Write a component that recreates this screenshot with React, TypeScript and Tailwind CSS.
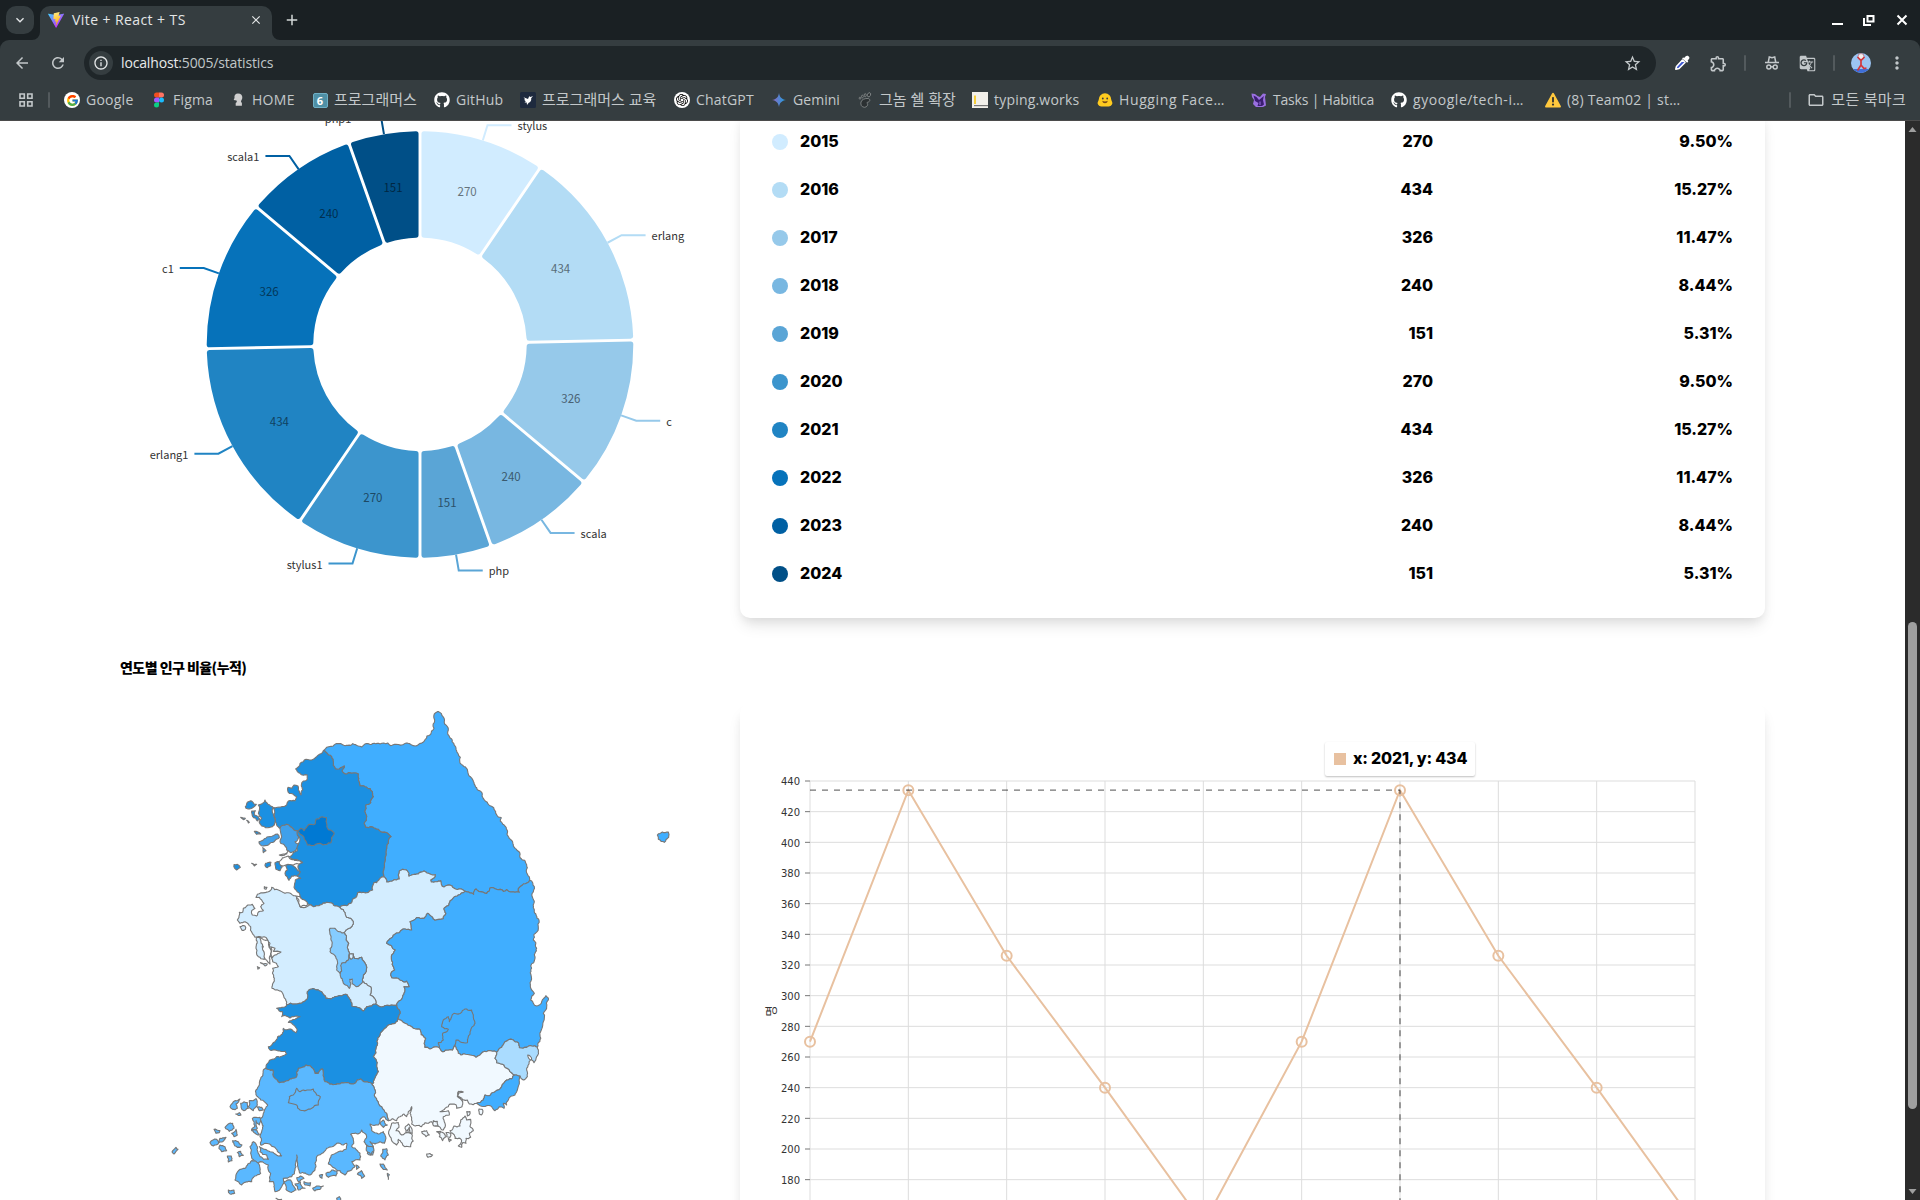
import React from "react";
import { FaGithub } from "react-icons/fa";
import { FcGoogle } from "react-icons/fc";
import { SiOpenai } from "react-icons/si";
import {
  MdArrowBack,
  MdRefresh,
  MdInfoOutline,
  MdStarBorder,
  MdOutlineExtension,
  MdGTranslate,
  MdMoreVert,
  MdOutlineFolder,
  MdAdd,
  MdClose,
  MdKeyboardArrowDown,
} from "react-icons/md";

/* ---------- browser chrome ---------- */

function ViteLogo() {
  return (
    <svg viewBox="0 0 32 32" className="h-4 w-4">
      <defs>
        <linearGradient id="va" x1="0" y1="0" x2="0.7" y2="0.8">
          <stop offset="0" stopColor="#41d1ff" />
          <stop offset="1" stopColor="#bd34fe" />
        </linearGradient>
        <linearGradient id="vb" x1="0.4" y1="0" x2="0.6" y2="1">
          <stop offset="0" stopColor="#ffea83" />
          <stop offset="1" stopColor="#ffa800" />
        </linearGradient>
      </defs>
      <path fill="url(#va)" d="M31.8 4.6 16.9 31.2a.8.8 0 0 1-1.4 0L.3 4.6a.8.8 0 0 1 .8-1.2L16 6l14.9-2.7a.8.8 0 0 1 .9 1.3Z" />
      <path fill="url(#vb)" d="M22.9.2 11.9 2.300a.5.5 0 0 0-.3.4l-.7 11.400c0 .3.2.5.500.4l3-.7c.3 0 .5.200.5.5l-.9 4.500c-.1.300.2.600.500.5l1.900-.6c.3-.1.6.200.500.5l-1.500 7c-.1.4.500.700.700.3l9.300-18.700c.100-.3-.1-.6-.5-.6l-3.200.6c-.3.1-.6-.2-.5-.5l2.100-7.300c.1-.3-.1-.6-.4-.5Z" />
    </svg>
  );
}

const Google = () => (
  <span className="flex h-4 w-4 shrink-0 items-center justify-center rounded-full bg-white">
    <FcGoogle className="h-[13px] w-[13px]" />
  </span>
);
const Figma = () => (
  <svg viewBox="0 0 16 16" className="h-4 w-4 shrink-0">
    <path fill="#f24e1e" d="M8 .5H5.500a2.500 2.500 0 0 0 0 5H8z" />
    <path fill="#ff7262" d="M8 .5h2.500a2.500 2.500 0 0 1 0 5H8z" />
    <path fill="#a259ff" d="M8 5.500H5.500a2.500 2.500 0 0 0 0 5H8z" />
    <circle cx="10.500" cy="8" r="2.500" fill="#1abcfe" />
    <path fill="#0acf83" d="M8 10.500H5.500a2.500 2.500 0 1 0 2.500 2.500z" />
  </svg>
);
const Home = () => (
  <svg viewBox="0 0 16 16" className="h-4 w-4 shrink-0" fill="#cfcfcf">
    <path d="M8 1.500c3 0 4.600 2 4.300 4.500-.2 1.700-1.300 2.200-1.300 3.700l.9 1.200v2.900H5.700v-2.700l1.200-1-.4-1.600-2.800-.6.8-2C4 3.200 5.500 1.500 8 1.500Z" />
  </svg>
);
const Six = () => (
  <span className="flex h-4 w-4 shrink-0 items-center justify-center">
    <span className="flex h-[15px] w-[15px] items-center justify-center rounded-[2px] border border-[#6fb0c6] bg-[#4f90a6] text-[11px] leading-none font-bold text-white">
      6
    </span>
  </span>
);
const Github = () => <FaGithub className="h-4 w-4 shrink-0 text-white" />;
const Bird = () => (
  <svg viewBox="0 0 16 16" className="h-4 w-4 shrink-0">
    <rect width="16" height="16" rx="1.500" fill="#1e2a3e" />
    <path fill="#fff" d="M3.500 5.200 8 7l1.200-2.800L10.500 5 13 4l-1.800 2.300c.4 2.500-1 4-2.500 4.500L7 13l-.3-2.600-2.200.1 1.300-1.300L4 7.800l1.200-.5z" />
  </svg>
);
const Gpt = () => (
  <span className="flex h-4 w-4 shrink-0 items-center justify-center rounded-full bg-white">
    <SiOpenai className="h-[12px] w-[12px] text-black" />
  </span>
);
const Gemini = () => (
  <svg viewBox="0 0 16 16" className="h-4 w-4 shrink-0">
    <defs>
      <linearGradient id="gm" x1="0" y1="0" x2="1" y2="0">
        <stop offset="0" stopColor="#9168c0" />
        <stop offset="0.500" stopColor="#5684d1" />
        <stop offset="1" stopColor="#1ba1e3" />
      </linearGradient>
    </defs>
    <path fill="url(#gm)" d="M8 1C8.700 5.300 10.700 7.300 15 8 10.700 8.700 8.700 10.700 8 15 7.300 10.700 5.300 8.700 1 8 5.300 7.300 7.300 5.300 8 1Z" />
  </svg>
);
const Gnome = () => (
  <svg viewBox="0 0 16 16" className="h-4 w-4 shrink-0" fill="#2b3032" stroke="#8b9091" strokeWidth="0.800">
    <path d="M11 6.500c2.400.3 2.500 3-.2 3.700-1.300.4-1 .9-.4 1.400.8.900-.3 3.700-2.900 3.700C4.500 15.300 3.300 12.500 4 10c.6-2.500 4-3.800 7-3.500Z" />
    <ellipse cx="12" cy="2.800" rx="1.500" ry="2.200" transform="rotate(25 12 2.800)" />
    <ellipse cx="8.200" cy="3.200" rx="1" ry="1.600" />
    <ellipse cx="5.400" cy="4.500" rx="0.900" ry="1.300" />
    <ellipse cx="3" cy="6.200" rx="0.800" ry="1.100" />
  </svg>
);
const Typing = () => (
  <svg viewBox="0 0 16 16" className="h-4 w-4 shrink-0">
    <rect width="16" height="16" fill="#f2f0ea" />
    <rect x="2" y="3.500" width="2" height="8.500" fill="#f6cf3b" />
    <rect x="2" y="13" width="14" height="1.200" fill="#777" />
  </svg>
);
const Hugging = () => (
  <svg viewBox="0 0 16 16" className="h-4 w-4 shrink-0">
    <path fill="#ffcb1f" d="M8 1.300a6.300 6.300 0 0 1 6.300 6.500c.2 1.600 1.500 2.600 1 4-.5 1.800-2.500 3-4.300 2.700H5C3.200 14.800 1.200 13.600.7 11.800c-.5-1.400.8-2.400 1-4A6.300 6.300 0 0 1 8 1.300Z" />
    <circle cx="5.800" cy="6.500" r="0.900" fill="#3a3b45" />
    <circle cx="10.200" cy="6.500" r="0.900" fill="#3a3b45" />
    <path d="M5.300 8.700c1.400 1 4 1 5.400 0-.3 1.800-1.300 2.500-2.700 2.500s-2.400-.7-2.700-2.500Z" fill="#7a4a17" />
  </svg>
);
const Habitica = () => (
  <svg viewBox="0 0 16 16" className="h-4 w-4 shrink-0">
    <path fill="#9a70e0" d="M.5 1.500 4 2l2.500 2L9 5l3-3.500 3 .5-1 3 1 8.500-3 1.500H5l-3-3 1-4-2-3z" />
    <path fill="#3b1d72" d="M2.500 3.500l3 1.500L8 8l3-2.500L12.800 4 12 8l1 4.500-2 1.500H6.500l1-3-3.500-2z" />
    <path stroke="#9a70e0" d="M9 9.500v3.500" />
  </svg>
);
const Warning = () => (
  <svg viewBox="0 0 16 16" className="h-4 w-4 shrink-0">
    <path fill="#ffc83d" d="M8 .8c.5 0 .8.300 1 .7l6.800 12.400c.4.800-.1 1.600-1 1.600H1.200c-.9 0-1.400-.8-1-1.600L7 1.500c.2-.4.500-.7 1-.7Z" />
    <rect x="7.100" y="5" width="1.800" height="5.500" rx="0.700" fill="#2f2f2f" />
    <circle cx="8" cy="12.600" r="1.100" fill="#2f2f2f" />
  </svg>
);
const Incognito = () => (
  <svg viewBox="0 0 16 16" className="h-4 w-4" fill="none" stroke="#c3c8ca" strokeWidth="1.500">
    <path d="M4.300 7 5.300 2l2.700.7L10.700 2l1 5M1 7.500h14" />
    <circle cx="4.800" cy="12" r="2" />
    <circle cx="11.200" cy="12" r="2" />
    <path d="M6.800 11.800h2.400" />
  </svg>
);
const Pipette = () => (
  <svg viewBox="0 0 16 16" className="h-4 w-4">
    <path d="M1.800 14.200 2.500 11.500 8.500 5l2.500 2.500-6 6z" fill="#3a54d0" stroke="#fff" strokeWidth="1.600" strokeLinejoin="round" />
    <path d="M8 3.300l1.200-.8 1 .6c1-1.800 2.600-3.200 4.300-1.900s.8 3-.9 4.200l.7 1.200-1.200 1.200z" fill="#fff" />
  </svg>
);
const Avatar = () => (
  <svg viewBox="0 0 20 20" className="h-5 w-5">
    <defs>
      <clipPath id="av">
        <circle cx="10" cy="10" r="10" />
      </clipPath>
    </defs>
    <g clipPath="url(#av)">
      <rect width="20" height="20" fill="#9cc4f2" />
      <path d="M0 16h20v4H0z" fill="#3f6fd8" />
      <circle cx="10" cy="3.500" r="3" fill="#f4eeee" stroke="#a8485a" strokeWidth="0.600" />
      <path d="M10 6v6l-3.500 5.500M10 12l3 3.500 2.500-.5M6.500 4l3.500 3.500L13.500 4" stroke="#d3373d" strokeWidth="1.700" fill="none" />
    </g>
  </svg>
);

type Bookmark = { label: string; Icon: () => React.ReactElement; box: string; text: string };

const bookmarks: Bookmark[] = [
  { label: "Google", Icon: Google, box: "w-[87px]", text: "tracking-[0.25px]" },
  { label: "Figma", Icon: Figma, box: "w-[79px]", text: "tracking-[0.2px]" },
  { label: "HOME", Icon: Home, box: "w-[82px]", text: "tracking-[0.3px]" },
  { label: "프로그래머스", Icon: Six, box: "w-[122px]", text: "text-[15px] leading-5" },
  { label: "GitHub", Icon: Github, box: "w-[86px]", text: "tracking-[0.2px]" },
  { label: "프로그래머스 교육", Icon: Bird, box: "w-[154px]", text: "text-[15px] leading-5" },
  { label: "ChatGPT", Icon: Gpt, box: "w-[97px]", text: "tracking-[0.2px]" },
  { label: "Gemini", Icon: Gemini, box: "w-[86px]", text: "tracking-[0.05px]" },
  { label: "그놈 쉘 확장", Icon: Gnome, box: "w-[115px]", text: "text-[15px] leading-5" },
  { label: "typing.works", Icon: Typing, box: "w-[125px]", text: "tracking-[0.2px]" },
  { label: "Hugging Face…", Icon: Hugging, box: "w-[154px]", text: "tracking-[0.62px]" },
  { label: "Tasks | Habitica", Icon: Habitica, box: "w-[140px]", text: "tracking-[-0.2px]" },
  { label: "gyoogle/tech-i…", Icon: Github, box: "w-[154px]", text: "tracking-[0.55px]" },
  { label: "(8) Team02 | st…", Icon: Warning, box: "w-[150px]", text: "tracking-[0.22px]" },
];

function Divider({ className }: { className: string }) {
  return <span className={"h-4 w-0.5 rounded bg-[#535a5d] " + className} />;
}

function BrowserChrome() {
  return (
    <header className="z-10 flex h-[121px] shrink-0 flex-col border-b border-[#4b4b4b] bg-[#353d40] text-[14px] text-[#c3c8ca]">
      <div className="h-[49px] shrink-0 bg-[#1a2023]">
        <div className="flex h-10 items-center pl-1.5">
          <div className="flex h-7 w-7 items-center justify-center rounded-[10px] bg-[#353d40]">
            <MdKeyboardArrowDown className="h-4 w-4 text-[#e3e6e7]" />
          </div>
          <svg viewBox="0 0 8 8" className="-ml-0.5 h-2 w-2 self-end">
            <path d="M8 0v8H0a8 8 0 0 0 8-8Z" fill="#353d40" />
          </svg>
          <div className="mt-1.5 flex h-[34px] w-[232px] items-center rounded-t-[10px] bg-[#353d40] pb-1.5 pl-2">
            <ViteLogo />
            <span className="-mt-px ml-2 w-[177px] tracking-[0.42px] whitespace-nowrap text-[#e3e6e7]">Vite + React + TS</span>
            <MdClose className="h-3.5 w-3.5 text-[#e3e6e7]" />
          </div>
          <svg viewBox="0 0 8 8" className="h-2 w-2 self-end">
            <path d="M0 0v8h8a8 8 0 0 1-8-8Z" fill="#353d40" />
          </svg>
          <MdAdd className="ml-[3px] h-[18px] w-[18px] text-[#d3d7d8]" />
          <div className="ml-auto flex items-center pr-3 text-white">
            <span className="mt-2 mr-5 h-0.5 w-[11px] bg-white" />
            <svg viewBox="0 0 12 12" className="mr-[21px] h-3 w-3" fill="none" stroke="#fff" strokeWidth="2">
              <path d="M4.500 2h6v5.500h-6zM1 4v7h7" />
            </svg>
            <svg viewBox="0 0 12 12" className="h-3 w-3" stroke="#fff" strokeWidth="2">
              <path d="M1.500 1.500l9 9M10.500 1.500l-9 9" />
            </svg>
          </div>
        </div>
        <div className="h-[9px] rounded-t-[9px] bg-[#353d40]" />
      </div>
      <div className="-mt-[3px] flex h-[34px] shrink-0 items-center">
        <MdArrowBack className="ml-[13px] h-[18px] w-[18px]" />
        <MdRefresh className="ml-[18px] h-[18px] w-[18px]" />
        <div className="ml-[17px] flex h-[34px] w-[1572px] items-center rounded-full bg-[#1f2629] pr-[14px] pl-[5px]">
          <span className="flex h-6 w-6 items-center justify-center rounded-full bg-[#353d40]">
            <MdInfoOutline className="h-4 w-4 text-[#e3e6e7]" />
          </span>
          <span className="-mt-0.5 ml-2 tracking-[-0.15px] text-[#c0c6c8]">
            <span className="text-[#e8eaeb]">localhost</span>:5005/statistics
          </span>
          <MdStarBorder className="ml-auto h-[19px] w-[19px]" />
        </div>
        <div className="flex items-center">
          <span className="ml-[18px]">
            <Pipette />
          </span>
          <MdOutlineExtension className="ml-[19px] h-[19px] w-[19px]" />
          <Divider className="ml-4" />
          <span className="ml-[18px]">
            <Incognito />
          </span>
          <MdGTranslate className="ml-[19px] h-[17px] w-[17px]" />
          <Divider className="ml-[17px]" />
          <span className="ml-4">
            <Avatar />
          </span>
          <MdMoreVert className="ml-4 h-5 w-5" />
        </div>
      </div>
      <div className="flex h-10 shrink-0 items-center pl-[19px]">
        <svg viewBox="0 0 14 14" className="h-3.5 w-3.5" fill="none" stroke="#c3c8ca" strokeWidth="1.600">
          <path d="M1 1h4.300v4.300H1zM8.700 1H13v4.300H8.700zM1 8.700h4.300V13H1zM8.700 8.700H13V13H8.700z" />
        </svg>
        <Divider className="mr-[14px] ml-[15px]" />
        {bookmarks.map(({ label, Icon, box, text }) => (
          <div key={label} className={"flex shrink-0 items-center gap-1.5 " + box}>
            <Icon />
            <span className={"-mt-0.5 whitespace-nowrap " + text}>{label}</span>
          </div>
        ))}
        <div className="ml-auto flex items-center pr-[14px]">
          <Divider className="mr-[16px]" />
          <MdOutlineFolder className="h-[18px] w-[18px]" />
          <span className="-mt-0.5 ml-1.5 text-[15px] leading-5 tracking-[0.3px] whitespace-nowrap">모든 북마크</span>
        </div>
      </div>
    </header>
  );
}

/* ---------- donut chart ---------- */

const slices = [
  { id: "stylus", year: 2015, value: 270, pct: "9.50%", color: "#d1ecff", ink: "#66747d" },
  { id: "erlang", year: 2016, value: 434, pct: "15.27%", color: "#b3dcf5", ink: "#586c78" },
  { id: "c", year: 2017, value: 326, pct: "11.47%", color: "#96c9ea", ink: "#4a6273" },
  { id: "scala", year: 2018, value: 240, pct: "8.44%", color: "#78b7e1", ink: "#3b5a6e" },
  { id: "php", year: 2019, value: 151, pct: "5.31%", color: "#5aa5d6", ink: "#2c5169" },
  { id: "stylus1", year: 2020, value: 270, pct: "9.50%", color: "#3c95cd", ink: "#1d4964" },
  { id: "erlang1", year: 2021, value: 434, pct: "15.27%", color: "#2084c3", ink: "#104160" },
  { id: "c1", year: 2022, value: 326, pct: "11.47%", color: "#0672ba", ink: "#03385b" },
  { id: "scala1", year: 2023, value: 240, pct: "8.44%", color: "#0060a3", ink: "#002f50" },
  { id: "php1", year: 2024, value: 151, pct: "5.31%", color: "#004f87", ink: "#002742" },
];

const CX = 420;
const CY = 344.4;
const R_OUT = 213.3;
const R_IN = 106.7;
const PAD = (0.7 * Math.PI) / 180;
const CORNER = 2.6;

const polar = (r: number, a: number): [number, number] => [CX + r * Math.sin(a), CY - r * Math.cos(a)];
const fmt = ([x, y]: [number, number]) => x.toFixed(2) + " " + y.toFixed(2);

function slicePath(start: number, end: number) {
  const padR = Math.hypot(R_IN, R_OUT);
  const off = (r: number) => Math.asin((padR / r) * Math.sin(PAD / 2));
  const so = start + off(R_OUT);
  const eo = end - off(R_OUT);
  const si = start + off(R_IN);
  const ei = end - off(R_IN);
  const co = CORNER / R_OUT;
  const ci = CORNER / R_IN;
  const s1 = start + off(R_OUT - CORNER);
  const e1 = end - off(R_OUT - CORNER);
  const s2 = start + off(R_IN + CORNER);
  const e2 = end - off(R_IN + CORNER);
  return [
    "M", fmt(polar(R_OUT - CORNER, s1)),
    "Q", fmt(polar(R_OUT, so)), fmt(polar(R_OUT, so + co)),
    "A", R_OUT, R_OUT, 0, 0, 1, fmt(polar(R_OUT, eo - co)),
    "Q", fmt(polar(R_OUT, eo)), fmt(polar(R_OUT - CORNER, e1)),
    "L", fmt(polar(R_IN + CORNER, e2)),
    "Q", fmt(polar(R_IN, ei)), fmt(polar(R_IN, ei - ci)),
    "A", R_IN, R_IN, 0, 0, 0, fmt(polar(R_IN, si + ci)),
    "Q", fmt(polar(R_IN, si)), fmt(polar(R_IN + CORNER, s2)),
    "Z",
  ].join(" ");
}

function Donut() {
  const total = slices.reduce((s, d) => s + d.value, 0);
  const k = (Math.PI * 2 - PAD * slices.length) / total;
  let a = 0;
  const arcs = slices.map((d) => {
    const start = a;
    a += d.value * k + PAD;
    return { ...d, start, end: a, mid: (start + a) / 2 };
  });
  return (
    <svg viewBox="0 121 740 497" className="h-[497px] w-[740px] shrink-0 font-['Noto_Sans_CJK_KR',sans-serif] text-[11px]">
      {arcs.map((d) => (
        <path key={d.id} d={slicePath(d.start, d.end)} fill={d.color} />
      ))}
      {arcs.map((d) => {
        const dir = d.mid < Math.PI ? 1 : -1;
        const p0 = polar(R_OUT, d.mid);
        const p1 = polar(R_OUT + 16, d.mid);
        const x2 = p1[0] + dir * 24;
        return (
          <g key={d.id}>
            <path d={`M${fmt(p0)}L${fmt(p1)}H${x2.toFixed(2)}`} fill="none" stroke={d.color} strokeWidth="2" />
            <text x={x2 + dir * 6} y={p1[1] + 5} textAnchor={dir > 0 ? "start" : "end"} fill="#333">
              {d.id}
            </text>
          </g>
        );
      })}
      {arcs.map((d) => {
        const [x, y] = polar(160, d.mid);
        return (
          <text key={d.id} x={x} y={y + 5} textAnchor="middle" fill={d.ink} className="text-[11.5px]">
            {d.value}
          </text>
        );
      })}
    </svg>
  );
}

function YearTable() {
  return (
    <div className="-mt-[10px] h-[507px] w-[1025px] rounded-[10px] bg-white pt-[7px] shadow-[0_10px_15px_-3px_rgba(0,0,0,0.1),0_4px_10px_-1px_rgba(0,0,0,0.06)]">
      {slices.map((d) => (
        <div key={d.year} className="flex h-12 items-center pr-8 pl-8 text-[16px] font-extrabold text-black">
          <span className="h-4 w-4 rounded-full" style={{ backgroundColor: d.color }} />
          <span className="-mt-0.5 ml-3 w-[200px]">{d.year}</span>
          <span className="-mt-0.5 ml-auto w-[200px] text-right">{d.value}</span>
          <span className="-mt-0.5 w-[300px] text-right">{d.pct}</span>
        </div>
      ))}
    </div>
  );
}

/* ---------- map ---------- */

type Pt = [number, number];

/* Reads "x,y x,y …" drawn on a tile whose corner lies at (dx, dy) of the map grid. */
const tile = (dx: number, dy: number) => (s: string): Pt[] =>
  s
    .trim()
    .split(/\s+/)
    .map((p) => {
      const [x, y] = p.split(",").map(Number);
      return [x + dx, y + dy] as Pt;
    });

const nw = tile(0, 0);
const ne = tile(540, 0);
const sw = tile(0, 540);
const se = tile(480, 780);
const rev = (p: Pt[]) => [...p].reverse();

const noise = (a: Pt, b: Pt) => {
  const v = Math.sin((a[0] + b[0]) * 12.9898 + (a[1] + b[1]) * 78.233) * 43758.5453;
  return v - Math.floor(v) - 0.5;
};

/* Midpoint displacement; symmetric in its ends, so that neighbours share one border line. */
function rough(a: Pt, b: Pt, out: Pt[]) {
  const flip = a[0] > b[0] || (a[0] === b[0] && a[1] > b[1]);
  const [p, q] = flip ? [b, a] : [a, b];
  const len = Math.hypot(q[0] - p[0], q[1] - p[1]);
  if (len > 7) {
    const k = noise(p, q) * 0.36;
    const m: Pt = [(p[0] + q[0]) / 2 - (q[1] - p[1]) * k, (p[1] + q[1]) / 2 + (q[0] - p[0]) * k];
    rough(a, m, out);
    rough(m, b, out);
  } else {
    out.push(b);
  }
}

function toPath(parts: Pt[][]) {
  const pts = parts.flat();
  const out: Pt[] = [];
  pts.forEach((p, i) => rough(p, pts[(i + 1) % pts.length], out));
  return "M" + out.map(([x, y]) => x.toFixed(1) + " " + y.toFixed(1)).join("L") + "Z";
}

const gwEast = [
  ...nw("313,150 320,142 345,133 355,131 368,134 398,131 415,138 425,141 445,131 480,132 503,129 512,137 528,133 580,137 600,130 615,119 632,103 642,85 644,60 643,42 652,35"),
  ...ne("116,35 129,50 134,72 145,90 143,96 155,117 168,145 181,172 184,193 205,222 222,248 243,275 246,288 262,307 285,332 304,353 301,364 319,387 321,402 338,426 343,442 354,453 361,474 380,494 382,503 382,522 389,541"),
];
const gwGb = ne("389,541 370,552 355,566 358,577 345,577 320,569 310,574 290,568 270,564 260,580 240,575 228,567 221,583 210,579 195,574");
const gwCb = [
  ...ne("195,574 165,566 155,557 132,561 122,542 94,546 92,540 106,524 90,522 72,513 55,522 27,529 22,512 8,508 -2,513 -5,525"),
  ...nw("538,537 520,541 500,546 491,530"),
];
const gwGg = nw("491,530 493,490 500,445 505,430 513,410 505,402 482,395 465,385 452,380 437,382 432,370 440,350 434,335 437,315 452,308 460,290 457,275 440,262 420,258 415,240 415,222 395,220 376,222 366,213 373,198 362,203 358,207 346,206 340,185 335,170 325,165 313,150");
const ggCb = nw("491,530 480,535 470,548 462,548 458,570 440,578 425,578 413,578 410,590 397,600 395,608 380,617 360,623");
const ggSouth = nw("360,623 345,618 330,608 320,607 300,615 270,614");
const ggWest = nw("255,606 240,590 228,570 222,562 226,540 242,535 232,528 240,515 235,505 238,490 248,488 238,482 225,478 208,470 218,462 232,452 228,440 236,430 236,410 232,392 215,382 200,373 188,378 180,385 170,375 163,350 160,323 185,320 200,315 205,303 225,302 230,290 220,283 208,280 204,262 215,265 222,255 234,258 235,270 243,285 248,270 244,255 250,243 262,238 262,225 240,220 227,207 240,190 258,178 280,178 300,162");
const cnCb = sw("360,83 375,98 380,112 395,118 400,132 378,150 373,157 378,180 386,190 388,222 400,222 403,235 425,232 438,255 435,280 428,305 440,312 452,320 450,345 463,355 467,372");
const cbJb = sw("467,372 490,380 515,375 530,375");
const gbCb = [
  ...sw("530,375 548,350 552,320 568,320 560,303 540,300 515,293 512,285 524,270 522,215 526,210 515,198 500,190 520,165 545,150 565,148 575,150 570,125 590,113 612,115"),
  ...ne("83,640 95,650 105,661 130,656 138,640 132,625 150,603 175,585 195,574"),
];
const cnWest = sw("260,80 242,82 230,50 195,40 175,30 155,22 145,35 135,38 112,43 108,52 118,52 125,60 132,70 122,80 130,92 113,100 110,108 97,105 95,92 105,85 97,73 80,78 70,85 68,97 58,97 57,112 52,120 60,130 75,125 85,132 92,140 97,160 105,172 120,170 142,178 150,190 148,200 160,215 152,230 158,245 175,260 158,265 163,295 156,325 185,335 197,358 200,375");
const cnJb = sw("200,375 225,372 250,365 262,357 262,335 275,327 305,335 318,355 345,350 382,345 392,360 395,378 412,382 430,393 440,380 467,372");
const jbGb = sw("530,375 540,395 533,415");
const gnJb = sw("533,415 525,430 500,440 480,465 468,505 460,530 470,555 475,575 462,600 457,615");
const jbJn = sw("457,615 440,605 422,597 405,610 365,608 330,613 315,605 310,580 308,567 295,580 285,580 275,563 258,555 235,565 230,590 205,602 178,608 165,595 158,570 137,565");
const jbWest = sw("137,565 150,540 170,530 187,528 200,522 196,514 180,513 150,510 145,500 165,485 187,462 190,445 212,447 228,458 231,452 222,436 205,427 225,418 240,410 210,414 185,410 187,395 170,385");
const gbGn = se("53,175 75,190 95,200 118,207 137,235 132,250 134,262 150,267 175,262 188,275 205,270 218,270 224,256 228,262 235,280 243,285 270,285 288,292 300,285 325,272 350,277");
const gbUl = se("350,277 365,262 375,245 400,240 415,248 418,263 440,262 455,258 472,262");
const gnUl = se("350,277 345,295 350,308 372,315 390,335 405,345");
const gnBs = se("405,345 380,360 365,380 345,395 315,405 310,420 290,430");
const gbEast = [
  ...ne("389,541 403,560 401,600 403,630 417,660 415,685 402,703 400,720 410,745 405,775 392,798"),
  ...se("453,45 450,68 455,90 463,100 452,120 460,130 470,138 485,125 498,107 505,120 500,140 490,160 490,185 480,225 472,262"),
];
const gnSouth = se("290,430 268,432 262,420 248,420 240,412 232,408 236,398 250,396 236,394 232,410 248,425 246,440 230,445 228,434 210,432 205,440 180,455 205,452 208,465 190,470 195,490 190,510 178,500 165,498 155,485 135,488 125,500 95,492 90,460 95,440 85,455 80,470 72,462 60,470 50,482 38,476 25,482");
const gnJn = sw("505,722 500,700 485,680 470,660 465,630 457,615");
const jnSouth = sw("505,722 492,710 480,720 475,735 450,732 455,752 475,762 490,755 497,770 493,790 480,785 465,792 450,785 460,805 458,825 442,820 445,800 432,785 440,770 425,750 412,762 392,763 400,780 395,800 412,812 422,830 420,840 395,845 405,858 395,870 375,885 360,872 345,865 325,852 330,835 355,815 378,808 380,790 370,795 350,790 320,805 310,818 290,830 285,850 285,870 270,885 240,880 233,850 230,825 227,850 225,870 215,890 190,895 185,920 165,935 160,905 148,905 152,880 145,855 120,845 105,850 92,820 90,800 100,785 112,800 120,830 145,838 140,825 120,815 118,800 135,808 150,815 185,828 160,800 135,790 122,795 120,770 128,745 118,720 130,700 143,675 122,660 108,630 118,615 120,600 130,570");

const regions: { fill: string; d: string }[] = [
  { fill: "#40aeff", d: toPath([gwEast, gwGb, gwCb, gwGg]) },
  { fill: "#1b90e2", d: toPath([rev(gwGg), ggCb, ggSouth, ggWest]) },
  { fill: "#d3edff", d: toPath([rev(ggCb), rev(gwCb), rev(gbCb), rev(cbJb), rev(cnCb)]) },
  { fill: "#d3edff", d: toPath([cnCb, rev(cnJb), rev(cnWest), rev(ggSouth)]) },
  { fill: "#40aeff", d: toPath([gbEast, rev(gbUl), rev(gbGn), rev(jbGb), gbCb, rev(gwGb)]) },
  { fill: "#f1f9ff", d: toPath([gbGn, gnUl, gnBs, gnSouth, gnJn, rev(gnJb)]) },
  { fill: "#1b90e2", d: toPath([cnJb, cbJb, jbGb, gnJb, jbJn, jbWest]) },
  { fill: "#5ab8ff", d: toPath([rev(jbJn), rev(gnJn), jnSouth]) },
  { fill: "#aadcff", d: toPath([gbUl, se("470,290 462,308 455,300 450,288 443,285 452,300 447,312 440,330 442,350 430,360 420,348"), rev(gnUl)]) },
  { fill: "#40aeff", d: toPath([se("405,345 420,348 418,365 412,390 405,405 385,420 380,435 370,430 372,445 358,440 345,452 335,440 320,437 300,437"), rev(gnBs)]) },
  { fill: "#0079d3", d: toPath([nw("232,392 242,385 252,392 267,373 285,372 288,358 303,351 319,353 321,375 327,390 342,398 335,412 333,428 320,433 300,430 275,437 262,435 255,420 245,405")]) },
  { fill: "#40a0eb", d: toPath([nw("200,373 215,382 232,392 236,410 225,425 235,432 230,445 212,458 200,450 182,430 185,410 180,385")]) },
  { fill: "#85ccff", d: toPath([sw("330,145 345,145 358,155 373,157 378,180 386,190 388,222 385,240 365,250 366,272 360,280 350,270 347,230 330,215 333,180")]) },
  { fill: "#5ab8ff", d: toPath([sw("388,222 393,238 400,222 403,235 425,232 438,255 435,280 428,305 410,320 398,312 397,297 389,298 388,325 372,312 367,297 361,280 365,250 385,240")]) },
  { fill: "#40aeff", d: toPath([se("228,240 240,245 262,248 270,215 285,190 280,165 275,150 260,147 245,157 222,160 215,170 208,185 205,170 190,180 185,200 205,208 188,220 190,240 175,248 188,275 205,270 218,270 224,256")]) },
  { fill: "#5ab8ff", d: toPath([sw("230,625 240,635 255,632 280,627 290,645 301,650 295,675 275,685 240,690 230,675 205,668 208,650 220,645")]) },
];

const islands: { fill: string; d: string }[] = [
  ["#1b90e2", nw("135,300 158,320 162,350 163,375 150,382 125,378 118,368 125,355 115,340 115,315")],
  ["#1b90e2", nw("76,320 82,307 96,304 109,313 100,322 88,327 78,325")],
  ["#1b90e2", nw("95,333 106,332 103,345 115,350 120,358 112,363 98,350")],
  ["#1b90e2", nw("62,352 76,355 70,359")],
  ["#1b90e2", nw("80,361 88,367 85,369")],
  ["#1b90e2", nw("103,394 122,402 110,403")],
  ["#40a0eb", nw("117,425 150,410 172,402 178,412 165,422 150,430 130,438 120,433")],
  ["#40a0eb", nw("128,443 138,452 130,458")],
  ["#fff", nw("178,465 190,462 205,452 200,462 185,467")],
  ["#1b90e2", nw("42,494 52,493 61,502 50,510 45,506")],
  ["#1b90e2", nw("95,490 110,493 103,498")],
  ["#1b90e2", nw("137,490 153,487 152,497 142,503 135,497")],
  ["#fff", nw("172,485 205,468 232,482 246,487 236,492 215,495 200,494 190,498")],
  ["#1b90e2", nw("165,488 178,487 187,500 180,512 168,508")],
  ["#1b90e2", nw("197,497 215,495 228,505 240,515 232,528 215,528 207,541 195,520 202,510")],
  ["#fff", nw("230,588 240,590 262,607 262,616 243,620")],
  ["#40aeff", ne("772,405 805,396 806,412 793,427 775,418")],
  ["#d3edff", sw("133,20 141,22 138,28 133,26")],
  ["#d3edff", sw("60,140 75,138 76,148 66,151")],
  ["#d3edff", sw("110,172 119,170 128,195 133,238 115,230 108,205")],
  ["#fff", sw("121,172 142,180 146,190 150,205 148,235 150,252 136,238 130,200")],
  ["#fff", sw("152,200 165,205 160,214 183,216 165,225 154,234")],
  ["#d3edff", sw("121,248 142,252 135,258")],
  ["#d3edff", sw("112,260 119,263 113,267")],
  ["#5ab8ff", sw("95,842 115,850 122,880 95,905 65,915 45,900 50,880 75,865")],
  ["#5ab8ff", sw("30,680 45,662 60,657 48,672 52,685 38,688")],
  ["#5ab8ff", sw("62,670 82,668 85,685 72,692")],
  ["#5ab8ff", sw("88,662 108,656 112,675 100,692 85,680")],
  ["#5ab8ff", sw("110,680 125,682 130,690 118,692")],
  ["#5ab8ff", sw("47,702 58,698 63,705")],
  ["#5ab8ff", sw("15,742 38,730 42,745 28,754")],
  ["#5ab8ff", sw("35,760 48,748 52,765 42,770")],
  ["#5ab8ff", sw("97,715 120,712 118,735 108,722 112,745 95,752 105,738")],
  ["#5ab8ff", sw("95,748 110,750 118,765 108,762")],
  ["#5ab8ff", sw("0,775 18,772 8,785 -6,790")],
  ["#5ab8ff", sw("0,795 15,800 20,812 5,815 -3,806")],
  ["#5ab8ff", sw("38,782 55,785 66,795 60,802 45,798")],
  ["#5ab8ff", sw("52,818 62,814 70,826 58,830")],
  ["#5ab8ff", sw("22,828 34,828 36,842 25,846")],
  ["#5ab8ff", sw("25,930 42,930 44,940 30,942")],
  ["#5ab8ff", sw("192,905 212,900 218,915 228,930 215,937 198,928")],
  ["#5ab8ff", sw("230,893 242,888 252,895 235,905")],
  ["#5ab8ff", sw("225,912 240,905 245,918 255,925 235,930")],
  ["#5ab8ff", sw("252,905 272,908 270,918 255,915")],
  ["#5ab8ff", sw("278,925 290,918 310,918 300,928 285,933")],
  ["#5ab8ff", sw("298,886 308,884 306,895")],
  ["#5ab8ff", sw("318,880 335,870 352,872 348,888 325,892")],
  ["#5ab8ff", sw("408,855 418,862 410,868")],
  ["#5ab8ff", sw("412,882 424,872 434,888 425,895")],
  ["#5ab8ff", sw("488,808 500,806 505,825 495,840 482,828")],
  ["#5ab8ff", sw("480,852 490,852 502,870 490,868")],
  ["#5ab8ff", sw("502,880 508,884 505,898")],
  ["#5ab8ff", sw("480,728 490,720 502,735 490,742")],
  ["#5ab8ff", sw("440,795 458,800 462,812 452,825 442,815")],
  ["#5ab8ff", sw("350,955 358,950 362,965 352,968")],
  ["#5ab8ff", sw("168,955 185,958 178,962")],
  ["#5ab8ff", sw("-144,816 -132,802 -126,808 -138,822")],
  ["#5ab8ff", sw("-30,788 -10,778 -4,788 -20,798")],
  ["#5ab8ff", sw("0,752 -18,748 -12,760 -2,758")],
  ["#f1f9ff", se("35,490 55,488 57,502 48,512 65,525 85,518 97,525 92,560 75,560 65,548 55,538 50,555 40,548 30,530 28,510")],
  ["#f1f9ff", se("75,505 85,492 95,505 97,520 78,518")],
  ["#fff", se("80,512 88,502 90,514")],
  ["#f1f9ff", se("210,512 222,498 240,498 242,480 255,468 260,480 272,478 270,500 280,512 268,520 272,532 258,535 258,550 248,548 245,562 235,558 245,542 240,535 225,535 220,522")],
  ["#f1f9ff", se("260,455 270,455 268,465 262,468")],
  ["#f1f9ff", se("297,447 307,448 304,465 298,462")],
  ["#f1f9ff", se("180,515 192,520 196,532 188,542 178,530")],
  ["#f1f9ff", se("198,518 212,520 210,532 200,530")],
  ["#f1f9ff", se("205,535 214,540 208,545")],
  ["#f1f9ff", se("160,482 172,484 174,498 162,498")],
  ["#f1f9ff", se("170,515 182,514 178,522")],
  ["#f1f9ff", se("125,515 140,512 148,525 138,530")],
  ["#f1f9ff", se("140,582 158,585 152,590 144,592")],
].map(([fill, pts]) => ({ fill: fill as string, d: toPath([pts as Pt[]]) }));

/* Map grid: three units to a pixel. */
function KoreaMap() {
  return (
    <svg
      viewBox="-660 -27 2220 1527"
      className="h-[509px] w-[740px] shrink-0"
      stroke="#777"
      strokeWidth="3.300"
      strokeLinejoin="round"
    >
      {regions.map((r, i) => (
        <path key={i} d={r.d} fill={r.fill} />
      ))}
      {islands.map((r, i) => (
        <path key={i} d={r.d} fill={r.fill} />
      ))}
    </svg>
  );
}

/* ---------- line chart ---------- */

const X0 = 810;
const STEP = 885 / 9;
const yPos = (v: number) => 781 + ((440 - v) * 460) / 300;
const series = slices.map((d, i) => ({ x: X0 + STEP * i, y: yPos(d.value) }));
const yTicks = Array.from({ length: 14 }, (_, i) => 440 - i * 20);

function LineChart() {
  return (
    <svg viewBox="740 703 1025 497" className="h-[497px] w-[1025px]">
      {yTicks.map((v) => (
        <line key={v} x1={X0} x2={X0 + 885} y1={yPos(v)} y2={yPos(v)} stroke="#ddd" />
      ))}
      {series.map((p) => (
        <line key={p.x} x1={p.x} x2={p.x} y1={781} y2={1241} stroke="#ddd" />
      ))}
      {yTicks.map((v) => (
        <g key={v}>
          <line x1={X0 - 5} x2={X0} y1={yPos(v)} y2={yPos(v)} stroke="#777" />
          <text
            x={X0 - 10}
            y={yPos(v) + 4.3}
            textAnchor="end"
            fill="#333"
            className="font-['DejaVu_Sans',sans-serif] text-[10px]"
          >
            {v}
          </text>
        </g>
      ))}
      <text
        transform="translate(776 1011) rotate(-90)"
        textAnchor="middle"
        fill="#333"
        className="font-['Noto_Sans_CJK_KR',sans-serif] text-[12px]"
      >
        명
      </text>
      <polyline points={series.map((p) => p.x + "," + p.y).join(" ")} fill="none" stroke="#e8c1a0" strokeWidth="2" />
      <g stroke="#000" strokeOpacity="0.55" strokeWidth="1.300" strokeDasharray="6 6">
        <line x1={X0} x2={series[6].x} y1={series[6].y} y2={series[6].y} />
        <line x1={series[6].x} x2={series[6].x} y1={series[6].y} y2={1241} />
      </g>
      {series.map((p) => (
        <circle key={p.x} cx={p.x} cy={p.y} r="5" fill="none" stroke="#e8c1a0" strokeWidth="2" />
      ))}
    </svg>
  );
}

export default function App() {
  return (
    <div className="flex h-[1200px] w-[1920px] flex-col overflow-hidden bg-white font-['Open_Sans','Noto_Sans_CJK_KR',sans-serif]">
      <BrowserChrome />
      <div className="flex h-[1079px]">
        <main className="flex w-[1905px] flex-col overflow-hidden font-['Inter','Noto_Sans_CJK_KR',sans-serif]">
          <section className="flex h-[497px] shrink-0">
            <Donut />
            <YearTable />
          </section>
          <h2 className="mt-[39px] h-[34px] shrink-0 pl-[120px] font-['Noto_Sans_CJK_KR',sans-serif] text-[14px] leading-5 font-black tracking-[-0.55px] text-black">
            연도별 인구 비율(누적)
          </h2>
          <section className="flex h-[509px] shrink-0">
            <KoreaMap />
            <div className="relative mt-3 h-[640px] w-[1025px] rounded-[10px] bg-white shadow-[0_10px_15px_-3px_rgba(0,0,0,0.1),0_10px_10px_-1px_rgba(0,0,0,0.05)]">
              <LineChart />
              <div className="absolute top-[39px] left-[585px] flex h-[34px] w-[150px] items-center rounded-[2px] bg-white px-[9px] text-[16px] font-extrabold whitespace-nowrap text-black shadow-[0_1px_2px_rgba(0,0,0,0.25)]">
                <span className="mr-[7px] h-3 w-3 shrink-0 bg-[#e8c1a0]" />
                <span className="-mt-0.5 tracking-[-0.2px]">x: 2021, y: 434</span>
              </div>
            </div>
          </section>
        </main>
        <aside className="flex w-[15px] flex-col items-center bg-[#2b2b2b]">
          <svg viewBox="0 0 15 15" className="h-[15px] w-[15px]" fill="#9f9f9f">
            <path d="M3.500 11 7.500 6l4 5z" />
          </svg>
          <div className="mt-[486px] h-[487px] w-[9px] rounded-full bg-[#9f9f9f]" />
          <svg viewBox="0 0 15 15" className="mt-auto h-[15px] w-[15px]" fill="#9f9f9f">
            <path d="M3.500 4 7.500 9l4-5z" />
          </svg>
        </aside>
      </div>
    </div>
  );
}
